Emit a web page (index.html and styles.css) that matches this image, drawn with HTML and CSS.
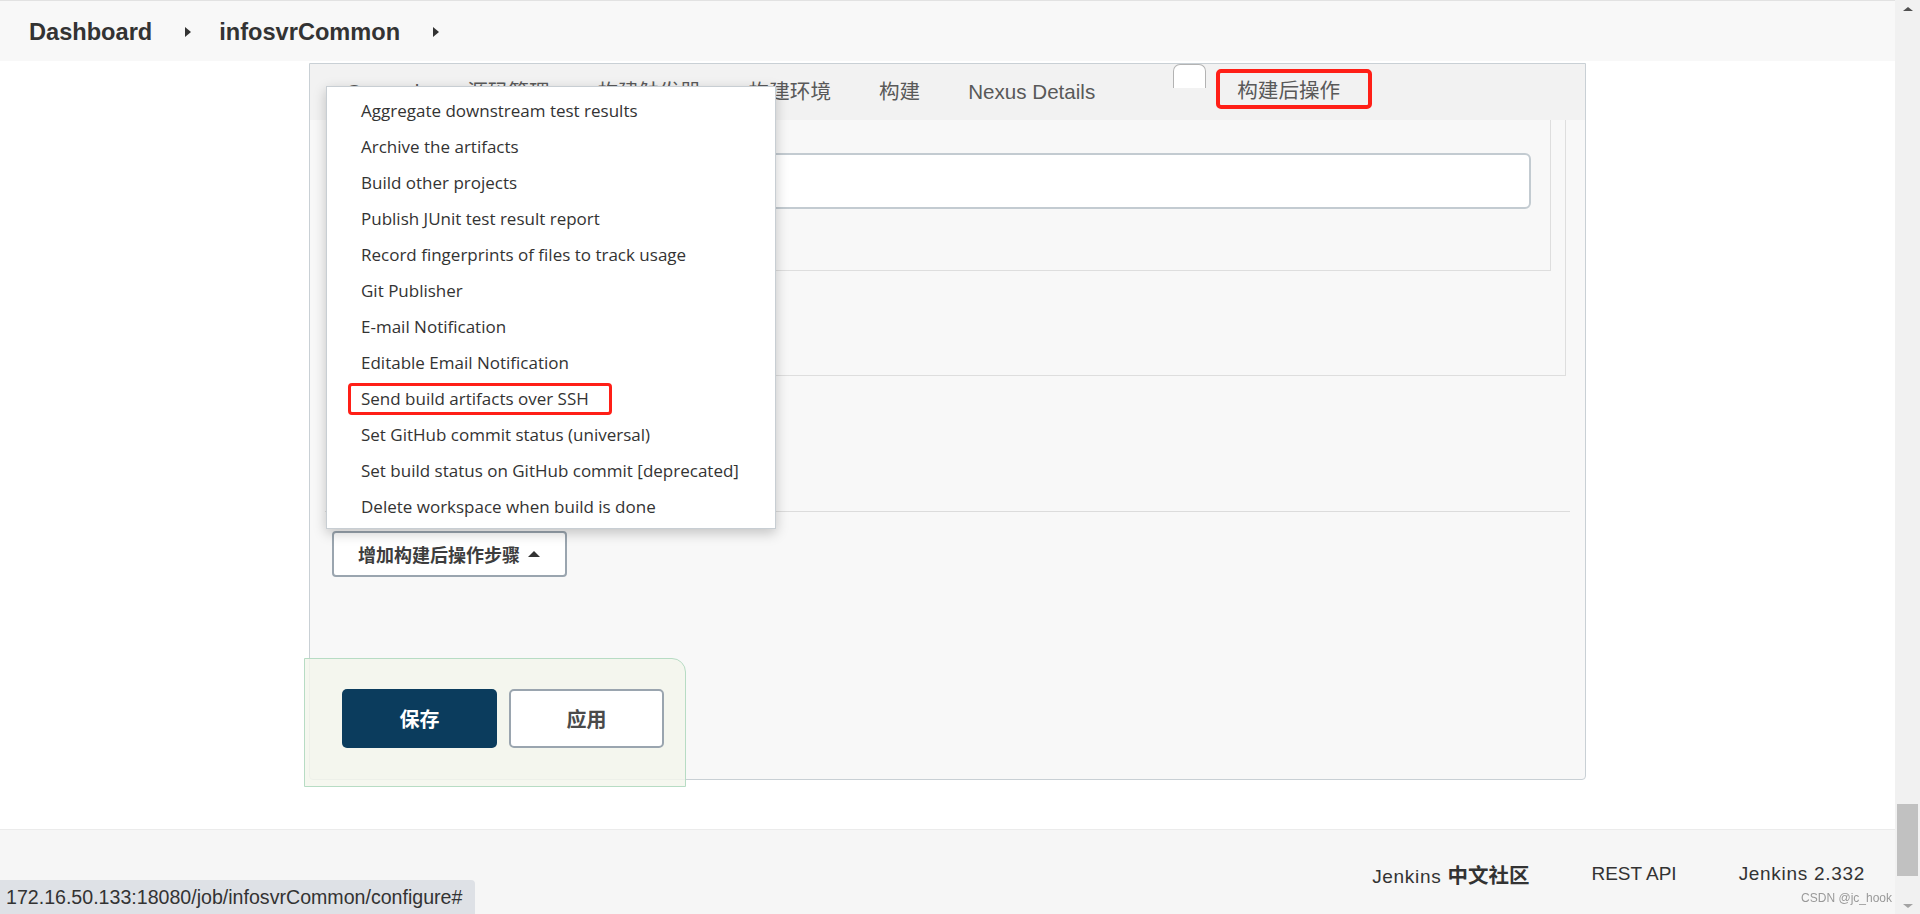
FILE: index.html
```html
<!DOCTYPE html>
<html lang="zh-CN">
<head>
<meta charset="UTF-8">
<title>infosvrCommon Config [Jenkins]</title>
<link rel="stylesheet" href="styles.css">
</head>
<body>
<div class="app">
  <div class="main">
    <!-- breadcrumbs -->
    <div class="crumbs">
      <a class="crumb">Dashboard</a><span class="crumb-arrow"></span>
      <a class="crumb">infosvrCommon</a><span class="crumb-arrow"></span>
    </div>

    <div class="page">
      <div class="panel">
        <div class="tabbar">
          <div class="tab">General</div>
          <div class="tab">源码管理</div>
          <div class="tab">构建触发器</div>
          <div class="tab">构建环境</div>
          <div class="tab">构建</div>
          <div class="tab">Nexus Details</div>
          <div class="tab-stub"></div>
          <div class="tab tab-marked">构建后操作</div>
        </div>

        <div class="panel-body">
          <div class="section">
            <div class="section-inner">
              <div class="text-input"></div>
            </div>
          </div>
          <div class="divider"></div>
          <button class="add-step">增加构建后操作步骤<span class="caret-up"></span></button>
        </div>

        <!-- post-build step menu -->
        <div class="menu">
          <div class="menu-item">Aggregate downstream test results</div>
          <div class="menu-item">Archive the artifacts</div>
          <div class="menu-item">Build other projects</div>
          <div class="menu-item">Publish JUnit test result report</div>
          <div class="menu-item">Record fingerprints of files to track usage</div>
          <div class="menu-item">Git Publisher</div>
          <div class="menu-item">E-mail Notification</div>
          <div class="menu-item">Editable Email Notification</div>
          <div class="menu-item"><span class="marked">Send build artifacts over SSH</span></div>
          <div class="menu-item">Set GitHub commit status (universal)</div>
          <div class="menu-item">Set build status on GitHub commit [deprecated]</div>
          <div class="menu-item">Delete workspace when build is done</div>
        </div>

        <div class="save-bar">
          <button class="btn btn-primary">保存</button>
          <button class="btn btn-plain">应用</button>
        </div>
      </div>
    </div>

    <div class="footer">
      <a class="foot-link wide">Jenkins <b>中文社区</b></a>
      <a class="foot-link">REST API</a>
      <span class="foot-link wide">Jenkins 2.332</span>
    </div>
  </div>

  <div class="scrollbar">
    <div class="sb-btn"><span class="sb-up"></span></div>
    <div class="sb-track"><div class="sb-thumb"></div></div>
    <div class="sb-btn"><span class="sb-down"></span></div>
  </div>
</div>

<div class="status-url">172.16.50.133:18080/job/infosvrCommon/configure#</div>
<div class="watermark">CSDN @jc_hook</div>
</body>
</html>
```

FILE: styles.css
```css
html, body {
    margin: 0;
    padding: 0;
    height: 100%;
    overflow: hidden;
}
body {
    font-family: "Open Sans", "Noto Sans CJK SC", sans-serif;
    color: #333;
    background: #fff;
}
.app {
    display: flex;
    height: 914px;
}
.main {
    flex: 1;
    display: flex;
    flex-direction: column;
    min-width: 0;
}

/* breadcrumbs */
.crumbs {
    height: 61px;
    box-sizing: border-box;
    border-top: 1px solid #e2e2e2;
    background: #f8f8f8;
    display: flex;
    align-items: center;
    padding: 2px 0 0 29px;
}
.crumb {
    font-family: "Liberation Sans", "Noto Sans CJK SC", sans-serif;
    font-weight: bold;
    font-size: 23.6px;
    color: #333;
}
.crumb-arrow {
    width: 0;
    height: 0;
    border-left: 6px solid #333;
    border-top: 5px solid transparent;
    border-bottom: 5px solid transparent;
    margin: 0 28px 0 33px;
}

/* config panel */
.page {
    padding-top: 2px;
}
.panel {
    position: relative;
    width: 1277px;
    height: 717px;
    margin: 0 auto;
    box-sizing: border-box;
    border: 1px solid #c9d0d5;
    border-radius: 0 0 4px 4px;
    background: #f8f8f8;
}
.tabbar {
    height: 56px;
    background: #f2f2f2;
    display: flex;
    align-items: center;
    padding-left: 12px;
}
.tab {
    font-family: "Liberation Sans", "Noto Sans CJK SC", sans-serif;
    font-size: 20.6px;
    line-height: 24px;
    color: #595959;
    padding: 0 24px;
    white-space: nowrap;
}
.tab-stub {
    align-self: flex-start;
    width: 33px;
    height: 24px;
    box-sizing: border-box;
    margin-left: 54px;
    background: #fff;
    border: 1px solid #b3b3b3;
    border-bottom: none;
    border-radius: 7px 7px 0 0;
}
.tab-marked {
    align-self: flex-start;
    margin: 5px 0 0 10px;
    height: 40px;
    box-sizing: border-box;
    padding: 4px 28px 0 17px;
    border: 4px solid #ff1f17;
    border-radius: 5px;
    display: flex;
    align-items: center;
}

.panel-body {
    padding: 0 19px;
}
.section {
    height: 256px;
    box-sizing: border-box;
    border: 1px solid #dedede;
    border-top: none;
    padding: 0 14px;
}
.section-inner {
    height: 151px;
    box-sizing: border-box;
    border: 1px solid #dedede;
    border-top: none;
    padding: 33px 19px 0;
}
.text-input {
    height: 56px;
    box-sizing: border-box;
    border: 2px solid #c3cbd1;
    border-radius: 6px;
    background: #fff;
}
.divider {
    margin: 135px -4px 0 -4px;
    border-top: 1px solid #dcdcdc;
}
.add-step {
    margin: 19px 0 0 3px;
    width: 235px;
    height: 46px;
    box-sizing: border-box;
    border: 2px solid #9aa5af;
    border-radius: 4px;
    background: #fff;
    display: flex;
    align-items: center;
    padding: 0 0 0 24px;
    font-family: "Noto Sans CJK SC", sans-serif;
    font-weight: bold;
    font-size: 18px;
    color: #3d3d3d;
    cursor: pointer;
}
.caret-up {
    width: 0;
    height: 0;
    border-bottom: 6px solid #333;
    border-left: 6px solid transparent;
    border-right: 6px solid transparent;
    margin-left: 8px;
}

/* dropdown menu */
.menu {
    position: absolute;
    left: 16px;
    top: 22px;
    width: 450px;
    height: 443px;
    box-sizing: border-box;
    padding: 6px 0 5px;
    background: #fff;
    border: 1px solid #c8ced3;
    box-shadow: 0 4px 12px rgba(0, 0, 0, 0.22);
    z-index: 5;
}
.menu-item {
    height: 36px;
    line-height: 36px;
    padding-left: 34px;
    font-size: 17px;
    color: #333;
    white-space: nowrap;
}
.marked {
    display: inline-block;
    height: 32px;
    line-height: 26px;
    box-sizing: border-box;
    margin-left: -13px;
    padding: 0 20px 0 10px;
    border: 3px solid #ff1f17;
    border-radius: 4px;
}

/* bottom save bar */
.save-bar {
    position: absolute;
    left: -6px;
    top: 594px;
    width: 382px;
    height: 129px;
    box-sizing: border-box;
    padding: 30px 0 0 37px;
    display: flex;
    gap: 12px;
    align-items: flex-start;
    background: rgba(243, 246, 236, 0.85);
    border: 1px solid #b7dcc4;
    border-radius: 0 14px 0 0;
    z-index: 4;
}
.btn {
    width: 155px;
    height: 59px;
    box-sizing: border-box;
    border-radius: 5px;
    font-family: "Noto Sans CJK SC", sans-serif;
    font-weight: bold;
    font-size: 20px;
    cursor: pointer;
}
.btn-primary {
    background: #0b3c5d;
    border: none;
    color: #fff;
}
.btn-plain {
    background: #fff;
    border: 2px solid #9aa5af;
    color: #4a4a4a;
}

/* footer */
.footer {
    margin-top: auto;
    height: 85px;
    box-sizing: border-box;
    border-top: 1px solid #ebebeb;
    background: #f6f6f6;
    display: flex;
    justify-content: flex-end;
    align-items: center;
    gap: 62px;
    padding: 4px 30px 0 0;
}
.foot-link {
    font-family: "Liberation Sans", "Noto Sans CJK SC", sans-serif;
    font-size: 19px;
    color: #333;
}
.foot-link.wide {
    letter-spacing: 0.7px;
}
.foot-link b {
    font-size: 20.5px;
    letter-spacing: 0;
}

/* fake window scrollbar */
.scrollbar {
    width: 25px;
    background: #f1f1f1;
    display: flex;
    flex-direction: column;
}
.sb-btn {
    height: 17px;
    display: flex;
    align-items: center;
    justify-content: center;
}
.sb-up {
    border-bottom: 4px solid #505050;
    border-left: 5px solid transparent;
    border-right: 5px solid transparent;
}
.sb-down {
    border-top: 4px solid #a3a3a3;
    border-left: 5px solid transparent;
    border-right: 5px solid transparent;
}
.sb-track {
    flex: 1;
    display: flex;
    flex-direction: column;
    justify-content: flex-end;
    padding-bottom: 21px;
}
.sb-thumb {
    height: 72px;
    margin: 0 2px;
    background: #c1c1c1;
}

.status-url {
    position: fixed;
    left: 0;
    bottom: 0;
    width: 475px;
    height: 34px;
    box-sizing: border-box;
    padding-left: 6px;
    line-height: 34px;
    background: #dee1e6;
    border-radius: 0 4px 0 0;
    font-family: "Liberation Sans", sans-serif;
    font-size: 19.6px;
    color: #333;
}
.watermark {
    position: fixed;
    right: 28px;
    bottom: 9px;
    font-family: "Liberation Sans", sans-serif;
    font-size: 12px;
    color: #999;
}
```
